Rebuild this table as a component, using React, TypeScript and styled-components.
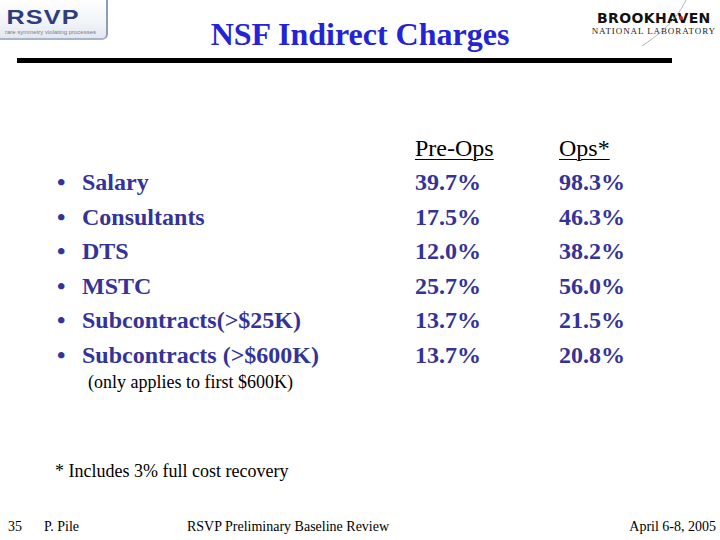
import React from "react";
import styled, { createGlobalStyle } from "styled-components";

const GlobalStyle = createGlobalStyle`
	html, body {
		margin: 0;
		padding: 0;
		background: #ffffff;
	}
	body {
		font-family: "Liberation Serif", "Times New Roman", serif;
	}
`;

const Slide = styled.div`
	width: 720px;
	height: 540px;
	display: flex;
	flex-direction: column;
	overflow: hidden;
	background: #ffffff;
`;

const Header = styled.header`
	display: grid;
	grid-template-columns: 1fr auto 1fr;
	align-items: start;
	height: 58px;
`;

const RsvpLogo = styled.div`
	justify-self: start;
	width: 102px;
	height: 31px;
	padding: 7px 0 0 4px;
	background: linear-gradient(180deg, #ffffff 0%, #f1f3f7 60%, #e3e7ef 100%);
	border-right: 2px solid #8f9cb8;
	border-bottom: 2px solid #a9b4cc;
	border-bottom-right-radius: 6px;
	box-sizing: content-box;
	display: flex;
	flex-direction: column;
	align-items: flex-start;
`;

const RsvpMark = styled.span`
	font-family: "Liberation Sans", Arial, sans-serif;
	font-weight: 700;
	font-size: 21px;
	line-height: 19px;
	letter-spacing: 1px;
	color: #2e3d80;
	padding-left: 2px;
	transform: scaleX(1.2);
	transform-origin: left center;
`;

const RsvpTag = styled.span`
	margin-top: 1.5px;
	font-family: "Liberation Sans", Arial, sans-serif;
	font-size: 6px;
	line-height: 8px;
	color: #7a7f8c;
	padding-left: 1px;
	white-space: nowrap;
`;

const Title = styled.h1`
	margin: 0;
	padding-top: 16px;
	font-size: 32px;
	line-height: 36px;
	font-weight: 700;
	color: #2424d6;
	white-space: nowrap;
`;

const BnlLogo = styled.div`
	justify-self: end;
	position: relative;
	margin: 11px 4px 0 0;
	display: flex;
	flex-direction: column;
	align-items: center;
`;

const BnlName = styled.span`
	font-family: "DejaVu Sans", sans-serif;
	font-weight: 900;
	font-size: 14px;
	line-height: 15px;
	letter-spacing: 0.4px;
	color: #111111;
`;

const BnlSub = styled.span`
	font-family: "Liberation Serif", serif;
	font-size: 9px;
	line-height: 10px;
	letter-spacing: 0.9px;
	color: #222222;
	white-space: nowrap;
`;

const Swoosh = styled.svg`
	position: absolute;
	right: -4px;
	top: -11px;
	width: 94px;
	height: 56px;
	pointer-events: none;
`;

const Rule = styled.div`
	margin: 0 0 0 17px;
	width: 655px;
	height: 5px;
	background: #000000;
`;

const Table = styled.div`
	display: grid;
	grid-template-columns: 25px 333px 144px auto;
	margin: 67.5px 0 0 57px;
	font-size: 24px;
	line-height: 34.5px;
`;

const Bullet = styled.span`
	font-weight: 700;
	color: #333399;
`;

const Item = styled.span<{ $bold?: boolean }>`
	font-weight: ${(p) => (p.$bold ? 700 : 400)};
	color: ${(p) => (p.$bold ? "#333399" : "#000000")};
	white-space: nowrap;
`;

const ColHead = styled.span`
	color: #000000;
	text-decoration: underline;
	text-decoration-thickness: 1px;
	text-underline-offset: 3px;
`;

const Note = styled.span`
	grid-column: 2 / span 3;
	padding-left: 6px;
	font-size: 18px;
	line-height: 21px;
	color: #000000;
`;

const Footnote = styled.p`
	margin: 68px 0 0 55px;
	font-size: 18px;
	line-height: 21px;
	color: #000000;
`;

const Footer = styled.footer`
	margin-top: auto;
	display: flex;
	padding: 0 4px 5px 8px;
	font-size: 14px;
	line-height: 16px;
	color: #000000;
`;

const FootCell = styled.span<{ $w?: number }>`
	width: ${(p) => (p.$w ? `${p.$w}px` : "auto")};
	&:last-child {
		margin-left: auto;
	}
`;

const rows = [
	["Salary", "39.7%", "98.3%"],
	["Consultants", "17.5%", "46.3%"],
	["DTS", "12.0%", "38.2%"],
	["MSTC", "25.7%", "56.0%"],
	["Subcontracts(>$25K)", "13.7%", "21.5%"],
	["Subcontracts (>$600K)", "13.7%", "20.8%"],
];

export default function App() {
	return (
		<Slide>
			<GlobalStyle />
			<Header>
				<RsvpLogo>
					<RsvpMark>RSVP</RsvpMark>
					<RsvpTag>rare symmetry violating processes</RsvpTag>
				</RsvpLogo>
				<Title>NSF Indirect Charges</Title>
				<BnlLogo>
					<Swoosh viewBox="0 0 94 56">
						<path
							d="M60 0 C54 12 46 26 16 46"
							fill="none"
							stroke="#a0a0a0"
							strokeWidth="0.8"
						/>
						<circle cx="55" cy="18" r="2" fill="#c0282d" />
					</Swoosh>
					<BnlName>BROOKHAVEN</BnlName>
					<BnlSub>NATIONAL LABORATORY</BnlSub>
				</BnlLogo>
			</Header>
			<Rule />
			<Table>
				<span />
				<span />
				<ColHead>Pre-Ops</ColHead>
				<ColHead>Ops*</ColHead>
				{rows.map(([label, pre, ops]) => (
					<React.Fragment key={label}>
						<Bullet>•</Bullet>
						<Item $bold>{label}</Item>
						<Item $bold>{pre}</Item>
						<Item $bold>{ops}</Item>
					</React.Fragment>
				))}
				<Note>(only applies to first $600K)</Note>
			</Table>
			<Footnote>* Includes 3% full cost recovery</Footnote>
			<Footer>
				<FootCell $w={36}>35</FootCell>
				<FootCell $w={143}>P. Pile</FootCell>
				<FootCell>RSVP Preliminary Baseline Review</FootCell>
				<FootCell>April 6-8, 2005</FootCell>
			</Footer>
		</Slide>
	);
}
